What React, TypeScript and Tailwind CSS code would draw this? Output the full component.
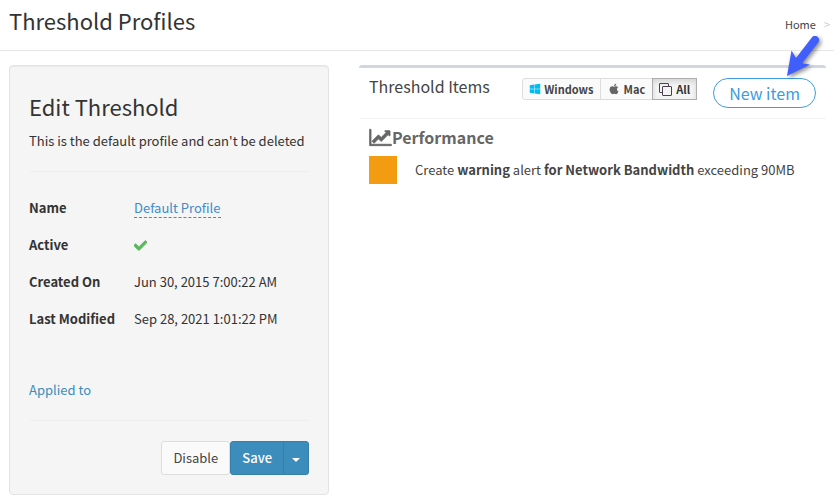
import type { ReactNode } from "react"
import { FaApple, FaCheck, FaWindows } from "react-icons/fa"

const details: Array<{ label: string; value: ReactNode }> = [
  {
    label: "Name",
    value: (
      <a href="#name" className="border-b border-dashed border-[#428bca] leading-[19px] text-[#428bca]">
        Default Profile
      </a>
    ),
  },
  { label: "Active", value: <FaCheck aria-label="Active" className="size-[13px] stroke-[#5cb85c] stroke-[36] text-[#5cb85c]" /> },
  { label: "Created On", value: "Jun 30, 2015 7:00:22 AM" },
  { label: "Last Modified", value: "Sep 28, 2021 1:01:22 PM" },
]

function LineChartIcon() {
  return (
    <svg
      viewBox="0 0 2048 1792"
      className="h-[19px] w-[23px]"
      fill="currentColor"
      stroke="currentColor"
      strokeWidth="80"
      aria-hidden="true"
    >
      <path d="M2048 1536v128h-2048v-1536h128v1408h1920zm-128-1248v435q0 21-19.5 29.5t-35.5-7.5l-121-121-633 633q-10 10-23 10t-23-10l-233-233-416 416-192-192 585-585q10-10 23-10t23 10l233 233 464-464-121-121q-16-16-7.5-35.5t29.5-19.5h435q14 0 23 9t9 23z" />
    </svg>
  )
}

function StackIcon() {
  return (
    <svg viewBox="0 0 13 13" className="size-[13px]" fill="none" stroke="#4a3f4a" aria-hidden="true">
      <path d="M3 9.5H1a.5.5 0 0 1-.5-.5V1a.5.5 0 0 1 .5-.5h8a.5.5 0 0 1 .5.5v2" />
      <rect x="3.5" y="3.5" width="9" height="9" rx="0.5" />
    </svg>
  )
}

function PointerArrow() {
  return (
    <svg
      viewBox="0 0 44 52"
      className="pointer-events-none absolute -right-2 bottom-6 h-[52px] w-11 drop-shadow-[2px_2px_2px_rgba(0,0,0,0.45)]"
      aria-hidden="true"
    >
      <path d="M35 8L18 30" stroke="#3f5efb" strokeWidth="8" strokeLinecap="round" />
      <path d="M7 44L11.5 18.5L16 26L23 31.5L30 32.5Z" fill="#3f5efb" />
    </svg>
  )
}

function EditThreshold() {
  return (
    <section className="w-80 shrink-0 rounded border border-[#e3e3e3] bg-[#f5f5f5] p-[19px] shadow-[inset_0_1px_1px_rgba(0,0,0,0.05)]">
      <h2 className="mt-[5px] text-[22px] leading-8">Edit Threshold</h2>
      <p className="mt-[9px] leading-5">This is the default profile and can't be deleted</p>
      <hr className="my-5 border-[#eee]" />
      <dl className="grid grid-cols-[105px_1fr] gap-y-[17px] pt-1.5">
        {details.map((item) => (
          <div key={item.label} className="contents">
            <dt className="font-bold">{item.label}</dt>
            <dd className="flex items-center">{item.value}</dd>
          </div>
        ))}
      </dl>
      <a href="#applied" className="mt-[51px] block text-[#3c8dbc]">
        Applied to
      </a>
      <hr className="my-5 border-[#eee]" />
      <div className="flex justify-end">
        <button type="button" className="h-[34px] rounded-[3px] border border-[#ddd] bg-[#fafafa] px-[11px] text-[#444]">
          Disable
        </button>
        <button type="button" className="h-[34px] rounded-l-[3px] border border-[#367fa9] bg-[#3c8dbc] px-[11px] font-medium text-white">
          Save
        </button>
        <button
          type="button"
          aria-label="More save options"
          className="-ml-px flex h-[34px] items-center rounded-r-[3px] border border-[#367fa9] bg-[#3c8dbc] px-2"
        >
          <span className="mt-1 border-x-4 border-t-4 border-x-transparent border-t-white" />
        </button>
      </div>
    </section>
  )
}

function ThresholdItems() {
  return (
    <section className="min-w-0 flex-1 rounded-[3px] border-t-[3px] border-[#d2d6de] text-[#444]">
      <header className="flex items-start justify-between border-b border-[#f4f4f4] px-2.5 pb-2.5">
        <h3 className="pt-2 text-base leading-5">Threshold Items</h3>
        <div className="flex gap-4 pt-2.5">
          <div className="flex h-[22px] text-[11px] leading-5 font-bold">
            <button type="button" className="flex items-center gap-[3px] rounded-l-[3px] border border-[#ddd] bg-[#fafafa] px-1.5">
              <FaWindows className="size-3 text-[#00bcf2]" />
              Windows
            </button>
            <button type="button" className="-ml-px flex items-center gap-1 border border-[#ddd] bg-[#fafafa] px-[7px]">
              <FaApple className="size-3 text-[#666]" />
              Mac
            </button>
            <button
              type="button"
              aria-pressed="true"
              className="-ml-px flex items-center gap-1 border border-[#adadad] bg-[#f4f4f4] px-1.5 text-[#333] shadow-[inset_0_3px_5px_rgba(0,0,0,0.125)]"
            >
              <StackIcon />
              All
            </button>
          </div>
          <div className="relative">
            <button type="button" className="h-[30px] rounded-full border border-[#3c9cdc] bg-white px-[15px] text-base leading-5 text-[#3c9cdc]">
              New item
            </button>
            <PointerArrow />
          </div>
        </div>
      </header>
      <div className="px-2.5 pt-2">
        <h4 className="flex items-center text-base leading-5 font-bold text-[#666]">
          <LineChartIcon />
          Performance
        </h4>
        <div className="mt-[9px] flex items-center">
          <span className="size-7 bg-[#f39c12]" />
          <p className="ml-[18px]">
            Create <b>warning</b> alert <b>for Network Bandwidth</b> exceeding 90MB
          </p>
        </div>
      </div>
    </section>
  )
}

export default function App() {
  return (
    <div className="bg-white font-['Noto_Sans_CJK_SC','Source_Sans_Pro',sans-serif] text-[13px] leading-5 text-[#333]">
      <header className="flex justify-between border-b border-[#e7e7e7] pr-1 pl-[9px]">
        <h1 className="pt-1 pb-3.5 text-[22px] leading-8">Threshold Profiles</h1>
        <nav aria-label="Breadcrumb" className="flex gap-2 pt-3.5 text-[11px] leading-5">
          <a href="#home" className="text-[#444]">
            Home
          </a>
          <span className="text-[#ccc]">&gt;</span>
        </nav>
      </header>
      <main className="flex items-start gap-[30px] pt-3.5 pr-2 pb-1.5 pl-[9px]">
        <EditThreshold />
        <ThresholdItems />
      </main>
    </div>
  )
}
